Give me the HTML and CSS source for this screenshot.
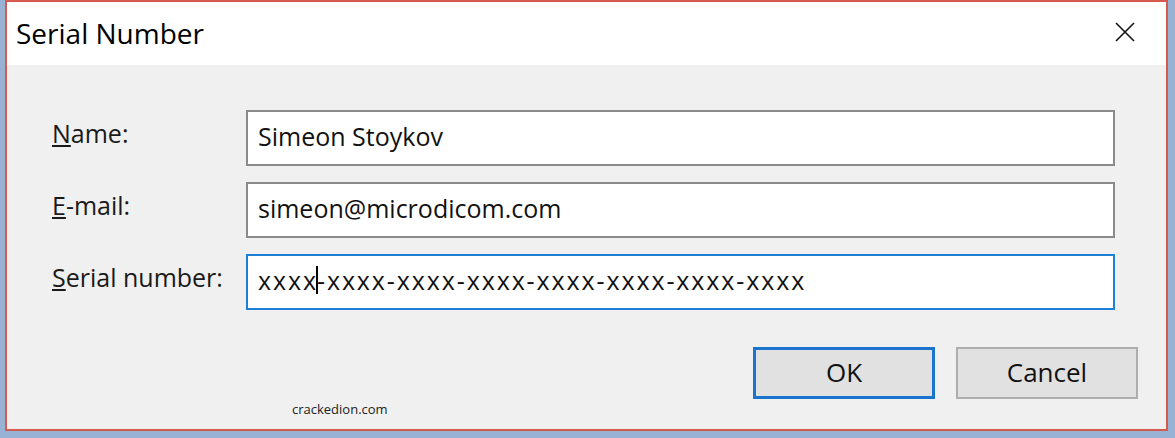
FILE: index.html
```html
<!DOCTYPE html>
<html lang="en">
<head>
	<meta charset="UTF-8">
	<title>Serial Number</title>
	<link rel="stylesheet" href="styles.css">
</head>
<body>
<div class="dlg">
	<div class="ttl">
		<span class="ttxt">Serial Number</span>
		<svg class="cls" width="20" height="20" viewBox="0 0 20 20"><path d="M1 1L19 19M19 1L1 19" stroke="#111" stroke-width="1.6" fill="none"/></svg>
	</div>
	<div class="bdy">
		<div class="frm">
			<div class="lbl"><u>N</u>ame:</div>
			<div class="fld">Simeon Stoykov</div>
			<div class="lbl"><u>E</u>-mail:</div>
			<div class="fld">simeon@microdicom.com</div>
			<div class="lbl"><u>S</u>erial number:</div>
			<div class="fld foc ser">xxxx<span class="car"></span>-xxxx-xxxx-xxxx-xxxx-xxxx-xxxx-xxxx</div>
		</div>
		<div class="btns">
			<button class="btn def">OK</button>
			<button class="btn">Cancel</button>
		</div>
		<div class="wm">crackedion.com</div>
	</div>
</div>
</body>
</html>
```
FILE: styles.css
```css
body {
	margin: 0;
	background: #98b2d6;
	font-family: "Open Sans", "Noto Sans", sans-serif;
	height: 438px;
	overflow: hidden;
}
.dlg {
	margin-left: 5px;
	width: 1159px;
	height: 427px;
	border: 2px solid #d65a4c;
	background: #f0f0f0;
	display: flex;
	flex-direction: column;
}
.ttl {
	height: 63px;
	background: #fff;
	display: flex;
	align-items: center;
	justify-content: space-between;
	padding: 0 31px 0 9px;
}
.ttxt {
	font-size: 28px;
	color: #000;
	margin-top: -2px;
}
.cls {
	margin-top: -3px;
}
.bdy {
	flex: 1;
	position: relative;
	padding: 45px 0 0 45px;
}
.frm {
	display: grid;
	grid-template-columns: 194px 869px;
	grid-auto-rows: 56px;
	row-gap: 16px;
	align-items: center;
}
.lbl {
	font-size: 25px;
	color: #1a1a1a;
	padding-bottom: 11px;
}
.fld {
	height: 100%;
	box-sizing: border-box;
	background: #fff;
	border: 2px solid #8a8a8a;
	font-size: 25px;
	color: #111;
	padding: 0 10px;
	display: flex;
	align-items: center;
	padding-bottom: 4px;
}
.fld.foc {
	border-color: #1e7fd6;
}
.ser {
	letter-spacing: 1.9px;
}
.car {
	display: inline-block;
	width: 2px;
	height: 28px;
	background: #000;
	margin: 0 -1px 0 -2px;
}
.btns {
	display: flex;
	justify-content: flex-end;
	gap: 21px;
	margin: 37px 28px 0 0;
}
.btn {
	width: 182px;
	height: 52px;
	background: #e1e1e1;
	border: 2px solid #adadad;
	font-family: inherit;
	font-size: 26px;
	color: #111;
	padding: 0 0 2px;
}
.btn.def {
	border: 3px solid #1a74cc;
}
.wm {
	position: absolute;
	left: 285px;
	top: 335px;
	font-size: 13px;
	color: #222;
}
```
